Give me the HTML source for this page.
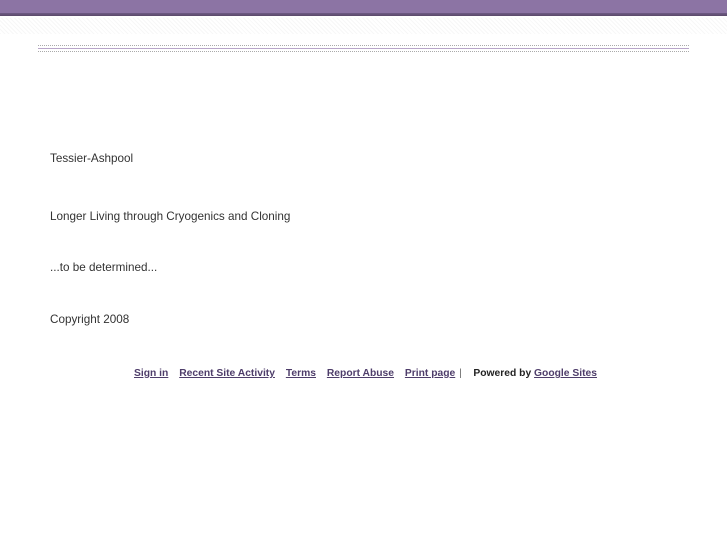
<!DOCTYPE html>
<html><head><style>
body{margin:0;width:727px;height:545px;background:#fff;font-family:"Liberation Sans",sans-serif;position:relative;overflow:hidden}
.top{position:absolute;left:0;top:0;width:727px;height:13px;background:#8c74a4}
.dk{position:absolute;left:0;top:13px;width:727px;height:3px;background:linear-gradient(#6e5a84,#5a4a6a)}
.pat{position:absolute;left:0;top:18px;width:727px;height:16px;background:repeating-linear-gradient(45deg,#f7f7f7 0 1px,#fff 1px 3px)}
.l{position:absolute;left:38px;width:651px;height:1px}
.t{position:absolute;left:50px;font-size:11.7px;color:#333}
.f{position:absolute;top:368px;left:134px;font-size:10.3px;font-weight:bold;color:#222;white-space:nowrap}
.f a{color:#4e3d6a;text-decoration:underline;margin-right:8px}
</style></head><body>
<div class="top"></div><div class="dk"></div><div class="pat"></div>
<div class="l" style="top:45px;background:repeating-linear-gradient(90deg,#aaa 0 1px,#fff 1px 2px)"></div>
<div class="l" style="top:48px;background:#b8a6c9"></div>
<div class="l" style="top:51px;background:repeating-linear-gradient(90deg,#aaa 0 1px,#fff 1px 2px)"></div>
<div class="t" style="top:152px">Tessier-Ashpool</div>
<div class="t" style="top:210px">Longer Living through Cryogenics and Cloning</div>
<div class="t" style="top:261px">...to be determined...</div>
<div class="t" style="top:313px">Copyright 2008</div>
<div class="f"><a>Sign in</a> <a>Recent Site Activity</a> <a>Terms</a> <a>Report Abuse</a> <a style="margin-right:4px">Print page</a><span style="font-weight:normal;color:#666">|</span>&nbsp;&nbsp;&nbsp; Powered by <a>Google Sites</a></div>
</body></html>
